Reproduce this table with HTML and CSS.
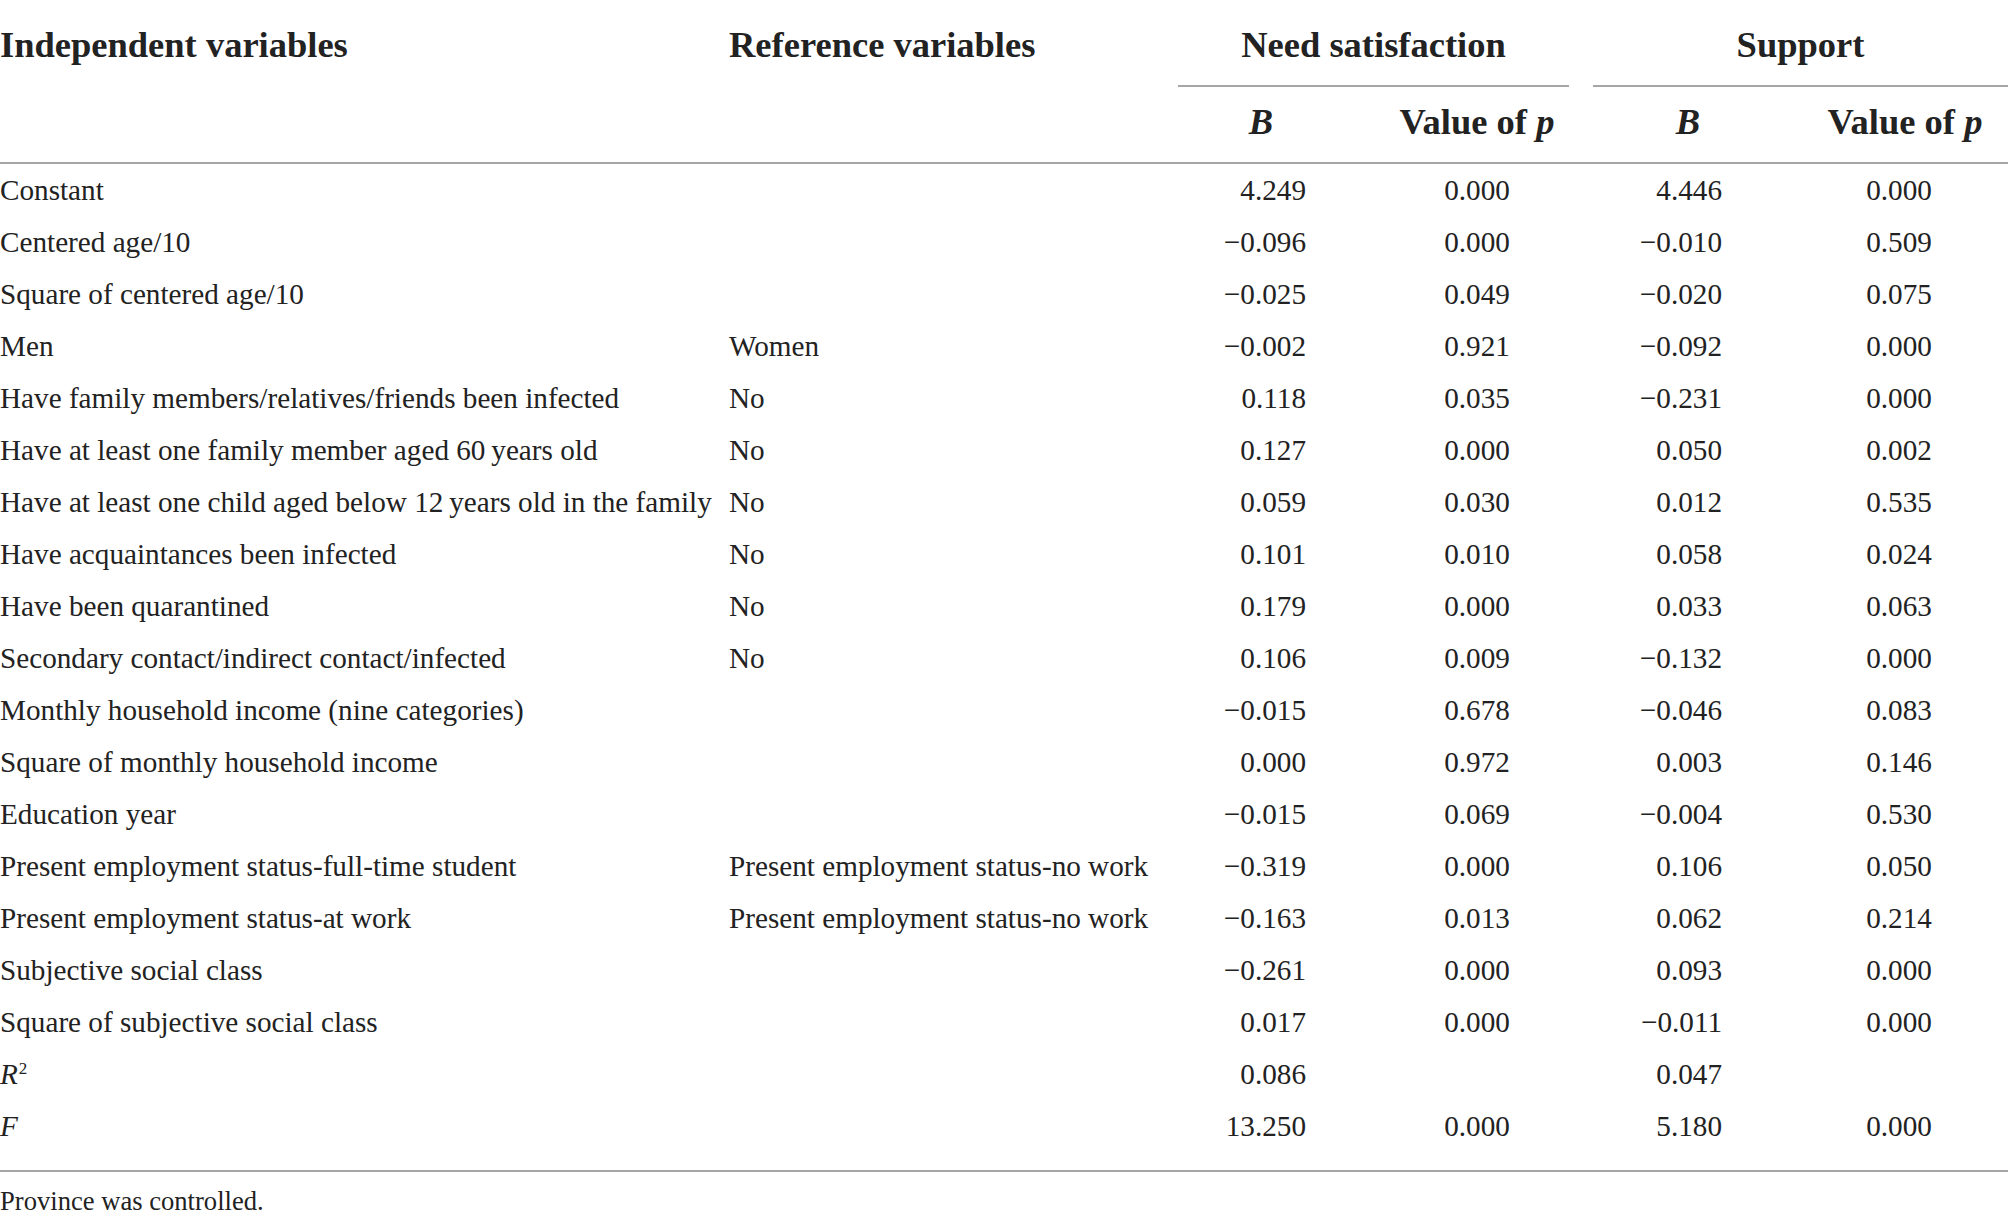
FILE: index.html
```html
<!DOCTYPE html>
<html lang="en">
<head>
<meta charset="utf-8">
<title>Regression table</title>
<link rel="stylesheet" href="styles.css">
</head>
<body>
<div class="page">
<table class="data">
  <colgroup>
    <col class="w-indep">
    <col class="w-ref">
    <col class="w-b1">
    <col class="w-p1">
    <col class="w-b2">
    <col class="w-p2">
  </colgroup>
  <thead>
    <tr>
      <th rowspan="2" class="h-indep">Independent variables</th>
      <th rowspan="2" class="h-ref">Reference variables</th>
      <th colspan="2" class="h-group h-need"><div class="group-label">Need satisfaction</div></th>
      <th colspan="2" class="h-group h-support"><div class="group-label">Support</div></th>
    </tr>
    <tr>
      <th class="h-sub h-b1"><i>B</i></th>
      <th class="h-sub h-p"><span>Value of </span><i>p</i></th>
      <th class="h-sub h-b2"><i>B</i></th>
      <th class="h-sub h-p"><span>Value of </span><i>p</i></th>
    </tr>
  </thead>
  <tbody>
    <tr><td class="c-indep">Constant</td><td class="c-ref"></td><td class="c-b1">4.249</td><td class="c-p">0.000</td><td class="c-b2">4.446</td><td class="c-p2">0.000</td></tr>
    <tr><td class="c-indep">Centered age/10</td><td class="c-ref"></td><td class="c-b1">−0.096</td><td class="c-p">0.000</td><td class="c-b2">−0.010</td><td class="c-p2">0.509</td></tr>
    <tr><td class="c-indep">Square of centered age/10</td><td class="c-ref"></td><td class="c-b1">−0.025</td><td class="c-p">0.049</td><td class="c-b2">−0.020</td><td class="c-p2">0.075</td></tr>
    <tr><td class="c-indep">Men</td><td class="c-ref">Women</td><td class="c-b1">−0.002</td><td class="c-p">0.921</td><td class="c-b2">−0.092</td><td class="c-p2">0.000</td></tr>
    <tr><td class="c-indep">Have family members/relatives/friends been infected</td><td class="c-ref">No</td><td class="c-b1">0.118</td><td class="c-p">0.035</td><td class="c-b2">−0.231</td><td class="c-p2">0.000</td></tr>
    <tr><td class="c-indep">Have at least one family member aged 60&thinsp;years old</td><td class="c-ref">No</td><td class="c-b1">0.127</td><td class="c-p">0.000</td><td class="c-b2">0.050</td><td class="c-p2">0.002</td></tr>
    <tr><td class="c-indep">Have at least one child aged below 12&thinsp;years old in the family</td><td class="c-ref">No</td><td class="c-b1">0.059</td><td class="c-p">0.030</td><td class="c-b2">0.012</td><td class="c-p2">0.535</td></tr>
    <tr><td class="c-indep">Have acquaintances been infected</td><td class="c-ref">No</td><td class="c-b1">0.101</td><td class="c-p">0.010</td><td class="c-b2">0.058</td><td class="c-p2">0.024</td></tr>
    <tr><td class="c-indep">Have been quarantined</td><td class="c-ref">No</td><td class="c-b1">0.179</td><td class="c-p">0.000</td><td class="c-b2">0.033</td><td class="c-p2">0.063</td></tr>
    <tr><td class="c-indep">Secondary contact/indirect contact/infected</td><td class="c-ref">No</td><td class="c-b1">0.106</td><td class="c-p">0.009</td><td class="c-b2">−0.132</td><td class="c-p2">0.000</td></tr>
    <tr><td class="c-indep">Monthly household income (nine categories)</td><td class="c-ref"></td><td class="c-b1">−0.015</td><td class="c-p">0.678</td><td class="c-b2">−0.046</td><td class="c-p2">0.083</td></tr>
    <tr><td class="c-indep">Square of monthly household income</td><td class="c-ref"></td><td class="c-b1">0.000</td><td class="c-p">0.972</td><td class="c-b2">0.003</td><td class="c-p2">0.146</td></tr>
    <tr><td class="c-indep">Education year</td><td class="c-ref"></td><td class="c-b1">−0.015</td><td class="c-p">0.069</td><td class="c-b2">−0.004</td><td class="c-p2">0.530</td></tr>
    <tr><td class="c-indep">Present employment status-full-time student</td><td class="c-ref">Present employment status-no work</td><td class="c-b1">−0.319</td><td class="c-p">0.000</td><td class="c-b2">0.106</td><td class="c-p2">0.050</td></tr>
    <tr><td class="c-indep">Present employment status-at work</td><td class="c-ref">Present employment status-no work</td><td class="c-b1">−0.163</td><td class="c-p">0.013</td><td class="c-b2">0.062</td><td class="c-p2">0.214</td></tr>
    <tr><td class="c-indep">Subjective social class</td><td class="c-ref"></td><td class="c-b1">−0.261</td><td class="c-p">0.000</td><td class="c-b2">0.093</td><td class="c-p2">0.000</td></tr>
    <tr><td class="c-indep">Square of subjective social class</td><td class="c-ref"></td><td class="c-b1">0.017</td><td class="c-p">0.000</td><td class="c-b2">−0.011</td><td class="c-p2">0.000</td></tr>
    <tr><td class="c-indep"><i>R</i><sup class="sq">2</sup></td><td class="c-ref"></td><td class="c-b1">0.086</td><td class="c-p"></td><td class="c-b2">0.047</td><td class="c-p2"></td></tr>
    <tr><td class="c-indep"><i>F</i></td><td class="c-ref"></td><td class="c-b1">13.250</td><td class="c-p">0.000</td><td class="c-b2">5.180</td><td class="c-p2">0.000</td></tr>
  </tbody>
</table>
<p class="footnote">Province was controlled.</p>
</div>
</body>
</html>
```

FILE: styles.css
```css
html, body {
  margin: 0;
  padding: 0;
  background: #ffffff;
}

body {
  font-family: "Liberation Serif", "Times New Roman", serif;
  color: #222222;
  overflow: hidden;
}

.page {
  width: 2008px;
}

.data {
  width: 2008px;
  table-layout: fixed;
  border-collapse: separate;
  border-spacing: 0;
}

.w-indep { width: 717px; }
.w-ref { width: 449px; }
.w-b1 { width: 207px; }
.w-p1 { width: 208px; }
.w-b2 { width: 221px; }
.w-p2 { width: 206px; }

.data th {
  font-weight: bold;
  font-size: 36.5px;
  line-height: 44px;
  color: #222222;
  white-space: nowrap;
  vertical-align: top;
}

.h-indep,
.h-ref {
  text-align: left;
  padding: 23px 0 0 0;
  border-bottom: 2px solid #a6a6a6;
}

.h-ref {
  padding-left: 12px;
}

.h-group {
  padding: 23px 12px 0 12px;
  text-align: center;
}

.h-support {
  padding-right: 0;
}

.group-label {
  padding-bottom: 18px;
  border-bottom: 2px solid #a6a6a6;
}

.h-sub {
  padding: 13px 0 18px 0;
  text-align: center;
  border-bottom: 2px solid #a6a6a6;
}

.h-b1 { padding-right: 17px; }
.h-b2 { padding-right: 7px; }

.data td {
  font-size: 29.2px;
  line-height: 52px;
  padding: 0;
  white-space: nowrap;
  vertical-align: top;
}

.c-indep { text-align: left; }
.c-ref { text-align: left; padding-left: 12px !important; }
.c-b1 { text-align: right; padding-right: 67px !important; }
.c-b2 { text-align: right; padding-right: 80px !important; }
.c-p { text-align: center; }
.c-p2 { text-align: center; padding-right: 12px !important; }

.data tbody tr:last-child td {
  padding-bottom: 18px;
  border-bottom: 2px solid #a6a6a6;
}

.sq {
  font-size: 17px;
  line-height: 0;
  vertical-align: 0.6em;
  margin-left: 1px;
}

.footnote {
  margin: 9px 0 0 0;
  font-size: 26.6px;
  line-height: 40px;
}
```
